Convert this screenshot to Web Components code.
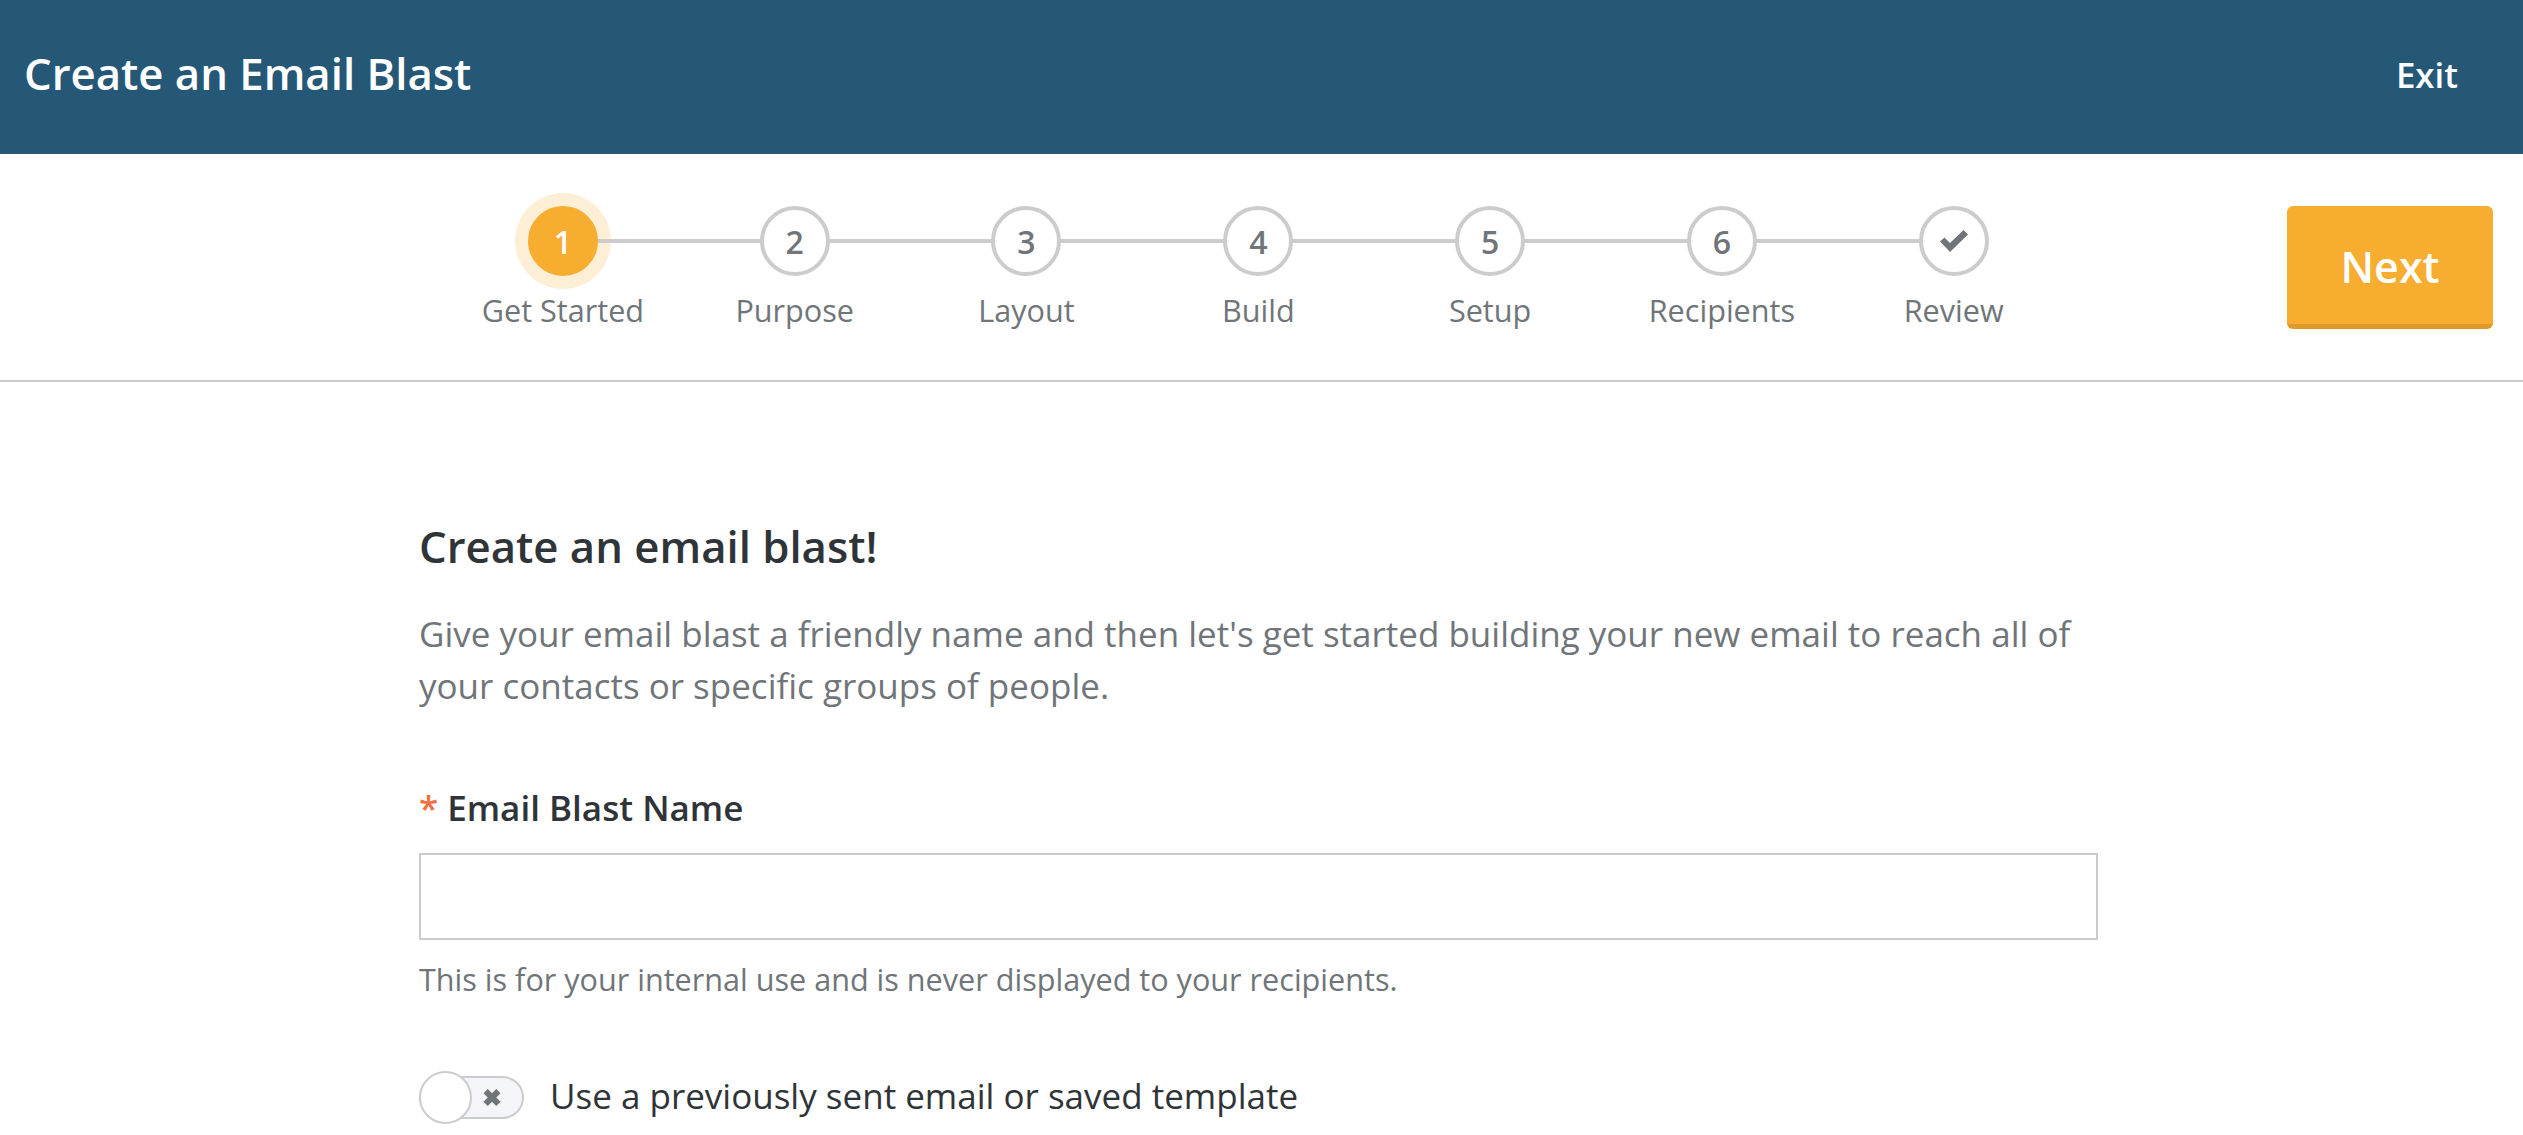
<!DOCTYPE html>
<html><head><meta charset="utf-8"><style>
html,body{margin:0;padding:0;background:#fff;overflow:hidden;height:1135px}
body{font-family:"Open Sans",sans-serif}
</style></head><body>
<wizard-page>
<wizard-header slot="header" title-text="Create an Email Blast"></wizard-header>
<wizard-stepper slot="stepper">
<wizard-step n="1" active>Get Started</wizard-step>
<wizard-step n="2">Purpose</wizard-step>
<wizard-step n="3">Layout</wizard-step>
<wizard-step n="4">Build</wizard-step>
<wizard-step n="5">Setup</wizard-step>
<wizard-step n="6">Recipients</wizard-step>
<wizard-step check last>Review</wizard-step>
</wizard-stepper>
<blast-form></blast-form>
</wizard-page>
<script>
function def(name,html,init){customElements.define(name,class extends HTMLElement{constructor(){super();this.attachShadow({mode:'open'}).innerHTML=html;}connectedCallback(){init&&init(this)}})}
def('wizard-page',`<style>:host{display:block}</style><slot name="header"></slot><slot name="stepper"></slot><slot></slot>`);
def('wizard-header',`<style>:host{display:flex;height:154px;background:#255776;color:#fff;align-items:center;justify-content:space-between;padding:0 65px 0 24px;box-sizing:border-box}
h1{margin:0;font-size:43.7px;font-weight:600;line-height:1;position:relative;top:-3px}
a{font-size:34.8px;font-weight:600;position:relative;top:-3px}</style><h1 id="t"></h1><a>Exit</a>`,el=>{el.shadowRoot.getElementById('t').textContent=el.getAttribute('title-text')});
def('wizard-stepper',`<style>:host{display:flex;height:228px;box-sizing:border-box;border-bottom:2px solid #ccc;padding:0 30px 0 447px;justify-content:space-between;align-items:flex-start}
.steps{display:flex;padding-top:52px}
.next{margin-top:52px;width:206px;height:123px;box-sizing:border-box;background:#f7ad2f;border-bottom:5px solid #e09a28;border-radius:6px;color:#fff;font-size:43px;font-weight:600;display:flex;align-items:center;justify-content:center;line-height:1;padding-top:3px}
</style><div class="steps"><slot></slot></div><div class="next">Next</div>`);
def('wizard-step',`<style>:host{display:flex;flex-direction:column;align-items:center;width:231.8px;position:relative;color:#6f7579;font-size:30.6px}
.halo{display:none;position:absolute;left:50%;top:-13px;width:96px;height:96px;margin-left:-48px;border-radius:50%;background:#fdeed6}
:host([active]) .halo{display:block}
.line{position:absolute;left:50%;top:33px;width:100%;height:4px;background:#ccc}
:host([last]) .line{display:none}
.c{position:relative;box-sizing:border-box;width:70px;height:70px;border-radius:50%;border:4px solid #ccc;background:#fff;display:flex;align-items:center;justify-content:center;font-weight:600;font-size:32px;color:#6f7579}
:host([active]) .c{background:#f7ad2f;border-color:#f7ad2f;color:#fff}
.l{position:relative;margin-top:13px;line-height:42px;white-space:nowrap}
svg{width:28px;height:22px;display:block}
</style><div class="halo"></div><div class="line"></div><div class="c" id="c"></div><div class="l"><slot></slot></div>`,el=>{
const c=el.shadowRoot.getElementById('c');
if(el.hasAttribute('check'))c.innerHTML='<svg viewBox="0 0 28 22"><path fill="#6f7579" d="M0 11.500 4.500 7.500 10 13 23.500 0 28 4.500 10 22z"/></svg>';else c.textContent=el.getAttribute('n');});
def('blast-form',`<style>:host{display:block;margin-left:419px;width:1679px;color:#2f3438}
h2{margin:0;padding-top:138px;font-size:43.7px;font-weight:600;line-height:52px}
p{margin:36px 0 0;font-size:35px;line-height:52px;color:#6f7579}
label{display:block;margin-top:73px;font-size:35px;font-weight:600;line-height:46px}
label b{color:#f2703f;font-weight:600;margin-right:9px}
.i{box-sizing:border-box;height:87px;border:2px solid #ccc;margin-top:22px}
small{display:block;margin-top:18px;font-size:30.6px;line-height:42px;color:#6f7579}
.row{display:flex;align-items:center;margin-top:70px;gap:26px;font-size:35px;line-height:54px}
span{position:relative;top:-1px}
</style><h2>Create an email blast!</h2>
<p>Give your email blast a friendly name and then let's get started building your new email to reach all of your contacts or specific groups of people.</p>
<label><b>*</b>Email Blast Name</label>
<div class="i"></div>
<small>This is for your internal use and is never displayed to your recipients.</small>
<div class="row"><x-toggle></x-toggle><span>Use a previously sent email or saved template</span></div>`);
def('x-toggle',`<style>:host{display:block;position:relative;width:105px;height:53px;flex:none}
.t{position:absolute;left:0;right:0;top:5px;bottom:5px;box-sizing:border-box;border:2px solid #ccc;border-radius:22px;background:#f3f5f8}
.k{position:absolute;left:0;top:0;width:53px;height:53px;box-sizing:border-box;border:2px solid #ccc;border-radius:50%;background:#fff}
svg{position:absolute;left:64px;top:18px;width:18px;height:17px}
</style><div class="t"></div><div class="k"></div><svg viewBox="0 0 20 20"><path fill="#6f7579" d="M0 5 5 0 10 5 15 0 20 5 15 10 20 15 15 20 10 15 5 20 0 15 5 10z"/></svg>`);
</script>
</body></html>
